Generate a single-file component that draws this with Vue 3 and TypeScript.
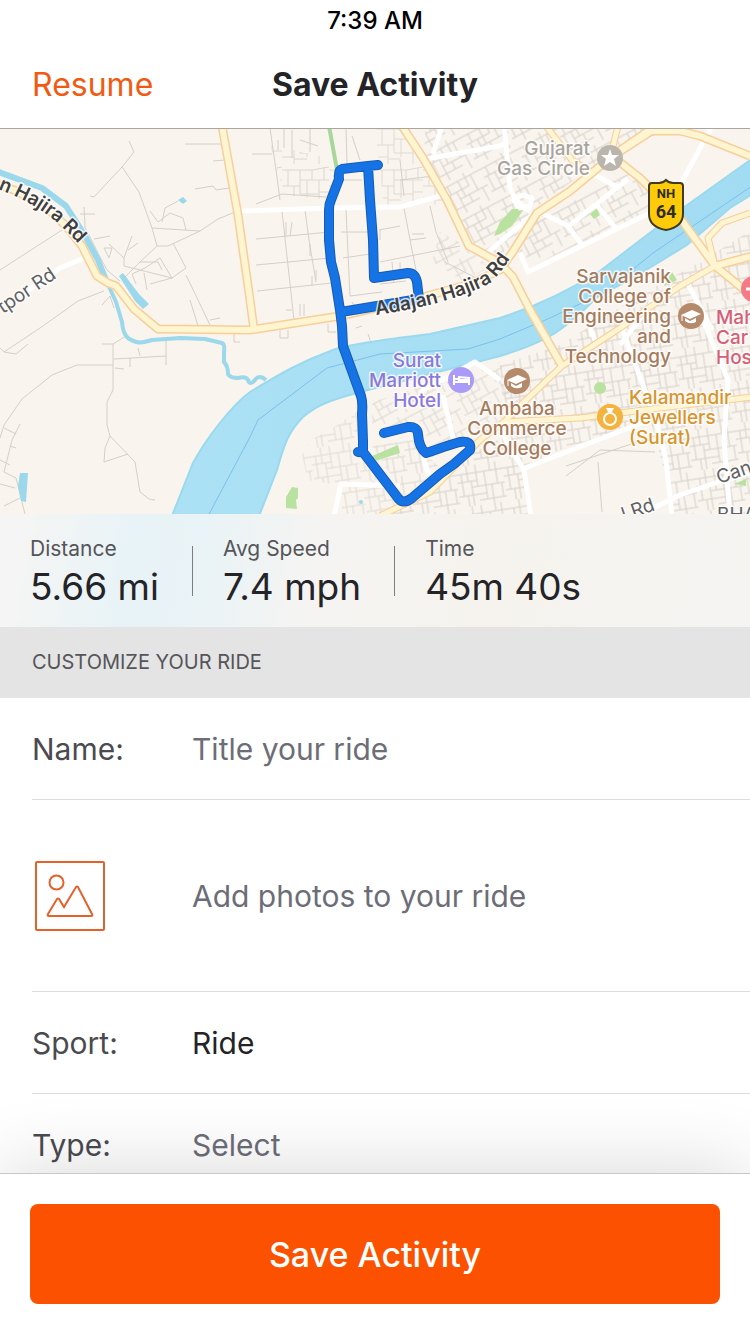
<script setup lang="ts">
import { ref } from 'vue'

interface Stat {
  label: string
  value: string
}

interface MapLabel {
  lines: string[]
  x: number
  y: number
  anchor: 'start' | 'middle' | 'end'
  tone: string
}

const stats: Stat[] = [
  { label: 'Distance', value: '5.66 mi' },
  { label: 'Avg Speed', value: '7.4 mph' },
  { label: 'Time', value: '45m 40s' },
]

const places: MapLabel[] = [
  { lines: ['Gujarat', 'Gas Circle'], x: 590, y: 155, anchor: 'end', tone: 'grey' },
  { lines: ['Sarvajanik', 'College of', 'Engineering', 'and', 'Technology'], x: 671, y: 283, anchor: 'end', tone: 'brown' },
  { lines: ['Surat', 'Marriott', 'Hotel'], x: 441, y: 367, anchor: 'end', tone: 'violet' },
  { lines: ['Ambaba', 'Commerce', 'College'], x: 517, y: 415, anchor: 'middle', tone: 'brown' },
  { lines: ['Kalamandir', 'Jewellers', '(Surat)'], x: 629, y: 404, anchor: 'start', tone: 'amber' },
  { lines: ['Mah', 'Car', 'Hos'], x: 716, y: 324, anchor: 'start', tone: 'rose' },
]

// Main roads are stroked twice: an orange casing, then a pale fill.
const mainRoads: string[] = [
  'M-4 184 L14 190 L45 206 L66 226 L82 246 L97 276 L108 283 L116 286 L134 309 L158 329 L250 330 L340 316 L420 298 L470 284 L500 270 L514 250 L537 213 L570 191 L610 158 L650 132 L668 126',
  'M222 126 L238 215 L250 300 L254 330',
  'M402 126 L423 158 L447 200 L469 246 L500 263 L513 277 L530 310 L562 366',
  'M750 156 L700 136 L680 131 L648 131 L612 156 L640 178 L680 218 L715 266 L752 296',
  'M715 266 L752 256',
]

const minorRoads: string[] = [
  'M546 126 L572 160 L590 172',
  'M618 126 L610 158',
  'M524 402 L562 366 L620 328 L680 286 L715 266',
  'M715 266 L708 238 L722 223 L750 213',
  'M752 397 L660 408 L580 418 L504 422 L480 440 L430 492 L380 516',
  'M504 422 L526 400',
]

const whiteRoads: string[] = [
  'M240 211 L330 208 L400 207 L440 196',
  'M420 160 L500 146 L508 142',
  'M433 154 L442 126',
  'M84 258 L60 268 L20 296',
  'M504 126 L506 146 L510 188 L516 200 L530 212',
  'M514 200 L522 195 L532 198 L530 206 L520 208 Z',
  'M542 213 L568 226 L582 245',
  'M520 253 L528 272 L592 241 L650 213',
  'M670 204 L712 126',
  'M590 172 L617 187 M628 179 L570 225',
  'M596 204 L617 230',
  'M486 254 L512 232 L536 212',
  'M418 400 L423 390 L475 362 L500 380',
  'M443 395 L453 438',
  'M423 456 L430 480',
  'M334 516 L341 484 L400 486',
  'M500 430 L524 470 L531 516',
  'M525 468 L600 439 L650 420',
  'M621 326 L656 420 L666 460 L672 516',
  'M702 318 L728 380 L724 440 L730 516',
  'M645 512 L680 495 L724 480 L760 470',
  'M590 328 L595 340 M620 345 L660 292',
  'M687 282 L712 330',
]

const lanes: string[] = [
  'M129 141 L134 152 L122 167 L94 197 L90 196 M122 167 L139 192 L152 228 L157 246 L168 246 L200 231 L218 219 L240 210',
  'M84 207 L85 227 L98 253 L107 270 L120 281 M80 214 L95 214 M185 144 L222 144 M213 161 L225 160 M195 189 L213 186 L216 190 L229 188',
  'M152 228 L200 231 M157 246 L140 262 L124 278 M173 243 L186 268 L172 278 L124 266 M186 275 L210 325 M190 300 L198 326 M210 320 L220 318',
  'M150 211 L158 222 L170 213 L183 218 L186 230 M162 222 L165 208 L178 201 M94 239 L110 236 M104 248 L112 248 L109 258 L104 248 M109 244 L124 258 L124 266',
  'M124 258 L132 236 M128 250 L138 243 M136 284 L132 274 L145 268 L160 258 L172 278 M144 273 L147 290 M150 284 L172 278 M140 262 L158 262 L162 270',
  'M0 270 L62 230 M104 291 L78 301 L40 328 L4 352 L16 354 L28 344 M0 348 L4 352 M102 305 L110 296 L114 308',
  'M102 344 L113 344 L126 336 M113 344 L113 390 L107 402 L107 425 L110 436 L135 462 L140 492 L149 499 L155 500 M110 436 L105 448 L104 462 L128 454',
  'M114 359 L166 356 L166 340 M115 368 L124 369 M130 358 L130 367 M140 356 L138 348 M166 365 L166 356',
  'M113 365 L77 365 L52 375 L22 399 L4 425 L0 438 M20 424 L12 440 L4 472 L16 478 L25 514 M4 428 L16 434 M0 484 L15 488 M4 506 L20 498 M10 446 L16 448 M0 460 L10 465',
  'M256 239 L330 232 M256 265 L330 258 M257 291 L332 283 M282 211 L294 320 M305 210 L309 240 L316 282 M270 128 L276 170 L280 200 M256 204 L282 194 L326 197',
  'M343 180 L362 180 M341 232 L368 232 M379 230 L400 226 M343 258 L370 254 M380 262 L430 252 L460 246 M400 160 L404 196 M346 210 L350 296',
  'M400 180 L434 176 M404 208 L412 250 L416 270 M430 206 L436 232 L448 262 M380 284 L406 281 M392 262 L394 283 M350 296 L382 292 M445 262 L480 280',
  'M566 476 L600 450 L655 452 M566 466 L655 436 M598 462 L602 512',
  'M278 140 V150 M284 128 V148 M292 130 V158 M252 154 H272 M300 140 L318 146 M310 128 V152 M346 128 L347 164 M352 136 L360 160',
  'M286 222 V236 M292 222 L290 236 M310 244 V256 M316 270 V280 M312 276 V286 M300 304 V316 M304 304 V316 M286 310 H292 M352 302 L358 312 M398 270 H412 M400 262 V274',
  'M380 230 V240 M412 234 H424 M410 240 L426 238 M368 334 L372 346 M356 328 L362 326 M328 324 V332 H336 M280 330 V338 H288 V330 M234 334 V342 H240',
]

const routePath =
  'M378 165 L368 166 L342 169 Q338 170 339 179 L331 200 Q329 204 329 210 V240 L331 262 L335 278 L340 310 L342 326 L343 346 L361 396 Q363 402 362 414 L363 441 V452 L358 452 L363 452 L398 498 Q403 505 412 498 L440 474 L454 464 L470 450 Q472 440 460 442 C445 446 436 450 426 453 Q419 448 418 434 Q417 426 408 427 L384 433 M368 166 L370 200 L373 240 L374 278 L408 273 Q415 273 417 282 L419 299 L341 312'

const title = ref('')
const sport = ref('Ride')
const rideType = ref('')
</script>

<template>
  <div class="screen">
    <header class="top">
      <div class="clock">7:39 AM</div>
      <nav class="nav">
        <button type="button" class="resume">Resume</button>
        <h1 class="heading">Save Activity</h1>
      </nav>
    </header>

    <main class="content">
      <svg class="map" viewBox="0 129 750 385" role="img" aria-label="Route map">
        <defs>
          <pattern id="blocks" width="47" height="41" patternUnits="userSpaceOnUse">
            <path
              class="street"
              d="M0 6 H30 M30 6 L47 3 M0 22 H18 M18 16 H47 M6 6 V22 M12 22 V41 M18 6 V30 M30 6 V16 M37 16 V41 M25 16 V34 M18 30 H37 M0 34 H12 M37 28 H47 M42 3 V16 M12 36 H25"
            />
          </pattern>
          <pattern id="blocks-east" patternTransform="rotate(-9)" width="47" height="41" patternUnits="userSpaceOnUse">
            <path
              class="street"
              d="M0 8 H47 M0 16 H20 M14 22 H47 M0 30 H28 M20 36 H47 M5 8 V30 M11 0 V16 M14 16 V41 M20 0 V22 M28 8 V36 M34 22 V41 M40 0 V22 M44 22 V36 M34 0 V8 M9 30 V41"
            />
          </pattern>
          <pattern id="blocks-north" patternTransform="rotate(-28)" width="43" height="37" patternUnits="userSpaceOnUse">
            <path
              class="street"
              d="M0 5 H43 M0 14 H26 M12 22 H43 M0 30 H30 M6 5 V14 M12 14 V37 M18 5 V22 M26 0 V14 M32 5 V22 M22 22 V30 M37 22 V37 M4 14 V30"
            />
          </pattern>
          <linearGradient id="riverFill" x1="0" y1="0" x2="1" y2="0">
            <stop offset="0" stop-color="#ace1f5" />
            <stop offset="1" stop-color="#a2dcf2" />
          </linearGradient>
        </defs>

        <rect class="land" x="0" y="129" width="750" height="385" />

        <polygon fill="url(#blocks-north)" points="425,129 650,129 608,155 530,212 512,245 495,262 470,243 445,196 424,158" />
        <polygon fill="url(#blocks-north)" points="560,208 630,172 660,205 528,268 519,252 538,216" />
        <polygon fill="url(#blocks)" points="375,129 405,129 424,164 446,202 428,206 384,206" opacity=".7" />
        <polygon fill="url(#blocks)" points="270,145 336,160 330,200 285,195" opacity=".8" />
        <polygon fill="url(#blocks-north)" points="440,232 466,246 490,268 462,280 432,262" opacity=".8" />
        <polygon fill="url(#blocks-east)" points="500,365 560,345 640,295 700,262 752,230 752,514 675,514 655,436 650,420 560,450 525,468 505,435" />
        <polygon fill="url(#blocks-north)" points="372,402 500,362 520,400 490,430 455,440 425,450 412,425 372,432" opacity=".8" />
        <polygon fill="url(#blocks-east)" points="302,455 310,440 330,430 356,412 362,450 405,506 395,514 342,514 342,486 308,480" opacity=".7" />
        <polygon fill="url(#blocks-east)" points="372,446 412,440 440,468 405,496" opacity=".8" />
        <polygon fill="url(#blocks-east)" points="475,452 505,435 524,470 532,514 395,514 440,480" />

        <g class="lanes">
          <path v-for="d in lanes" :key="d" :d="d" />
        </g>

        <g class="park">
          <path d="M500 222 L512 209 L524 209 L512 226 L500 234 L494 236 Z" />
          <path d="M590 214 L597 208 L600 215 L594 219 Z" />
          <path d="M372 456 L398 445 L400 453 L372 462 Z" />
          <path d="M286 497 L292 487 L298 488 L298 498 L296 500 L297 509 L286 508 Z" />
          <circle cx="600" cy="388" r="6" />
          <path d="M664 286 L672 272 L677 280 Z" />
          <path d="M734 484 L746 479 L746 486 Z" />
        </g>
        <path class="green-lane" d="M329 126 L337 170" />

        <path
          class="river"
          d="M756 156 L683 208 L647 235 L600 271 C570 290 540 305 500 318 L430 334 C380 340 345 345 333 350 C300 362 280 374 250 392 C232 405 205 440 193 463 L172 516 H259 L277 470 C284 445 288 432 303 417 C320 402 340 398 360 392 L500 356 C540 344 560 335 597 297 L633 278 L687 245 L730 208 L756 192 Z"
        />
        <path class="current" d="M752 186 L687 230 L653 253 L605 292 L550 318 L500 339 L468 349 L380 354 L327 368 L258 420 L250 437 L208 516" />

        <g class="creek">
          <path class="creek-wide" d="M-4 171 L42 188 L66 206 L84 234 L98 260 L106 280" />
          <path
            d="M106 280 L116 302 L122 322 Q123 334 128 338 C138 345 145 342 152 340 L180 338 L205 339 L222 343 Q225 344 224 352 L224 362 Q228 366 228 374 Q230 378 238 378 Q246 376 248 380 Q250 386 255 380 Q259 374 266 380"
          />
        </g>
        <g class="pond">
          <path d="M119 276 L123 273 L139 294 L149 304 L143 309 L135 301 Z" />
          <path d="M20 473 L28 473 L26 502 L21 501 L18 486 Z" />
          <path d="M178 200 L183 197 L187 201 L183 204 Z" />
          <circle cx="361" cy="502" r="2" />
        </g>

        <g class="white-roads">
          <path v-for="d in whiteRoads" :key="d" :d="d" />
        </g>
        <g class="road-casing">
          <path v-for="d in minorRoads" :key="d" class="minor" :d="d" />
          <path v-for="d in mainRoads" :key="d" :d="d" />
        </g>
        <g class="road-fill">
          <path v-for="d in minorRoads" :key="d" class="minor" :d="d" />
          <path v-for="d in mainRoads" :key="d" :d="d" />
        </g>

        <path class="route-edge" :d="routePath" />
        <path class="route" :d="routePath" />

        <defs>
          <path id="adajan" d="M376 315 C420 309 462 298 488 284 Q503 274 526 232" />
          <path id="hajira" d="M-2 189 C30 202 56 214 94 262" />
          <path id="canal" d="M719 484 L765 468" />
        </defs>
        <text class="road-name strong"><textPath href="#adajan">Adajan Hajira Rd</textPath></text>
        <text class="road-name strong"><textPath href="#hajira">n Hajira Rd</textPath></text>
        <text class="road-name" transform="translate(3 314) rotate(-34)">tpor Rd</text>
        <text class="road-name"><textPath href="#canal">Can</textPath></text>
        <text class="road-name" transform="translate(624 521) rotate(-19)">l Rd</text>
        <text class="road-name" x="717" y="521">BHA</text>

        <text v-for="place in places" :key="place.lines[0]" class="place" :class="place.tone" :text-anchor="place.anchor">
          <tspan v-for="(line, i) in place.lines" :key="line" :x="place.x" :y="place.y + i * 20">{{ line }}</tspan>
        </text>

        <circle cx="610" cy="158" r="13" fill="#bab5ad" />
        <path fill="#fff" d="M610 149 L612 155 L619 155 L614 159 L616 166 L610 162 L604 166 L606 159 L601 155 L608 155 Z" />

        <g v-for="pin in [{ x: 691, y: 316 }, { x: 517, y: 381 }]" :key="pin.x" :transform="`translate(${pin.x} ${pin.y})`">
          <circle r="13" fill="#b58a6b" />
          <path fill="#fff" d="M-10 -1 L1 -6 L10 -2 L-1 3 Z M-6 2 L-1 5 L5 2 L5 6 Q-1 9 -6 5 Z" />
          <path fill="none" stroke="#fff" d="M-9 -1 V5" />
        </g>

        <circle cx="461" cy="380" r="13" fill="#ab9bf8" />
        <path fill="none" stroke="#fff" stroke-width="2" d="M454 375 V385 M454 382 H469 V385 M469 382 V378 L459 377 V380 H469 M455 379 H458" />

        <circle cx="610" cy="417" r="13" fill="#f5b23c" />
        <circle cx="610" cy="419" r="6" fill="none" stroke="#fff" stroke-width="2" />
        <path fill="#fff" d="M606 408 H614 L612 412 H608 Z" />

        <circle cx="754" cy="289" r="13" fill="#f47a88" />
        <path stroke="#fff" stroke-width="3" d="M746 289 H760" />

        <path
          class="shield"
          d="M649 186 Q649 183 652 183 H659 Q663 183 666 180 Q669 183 673 183 H680 Q683 183 683 186 V214 C683 223 677 228 666 230 C655 228 649 223 649 214 Z"
        />
        <text class="shield-code" x="666" y="198" text-anchor="middle">NH</text>
        <text class="shield-number" x="666" y="218" text-anchor="middle">64</text>
      </svg>

      <dl class="stats">
        <div v-for="stat in stats" :key="stat.label" class="stat">
          <dt>{{ stat.label }}</dt>
          <dd>{{ stat.value }}</dd>
        </div>
      </dl>

      <h2 class="section">CUSTOMIZE YOUR RIDE</h2>

      <form id="ride" class="form" @submit.prevent>
        <div class="row">
          <label for="name">Name:</label>
          <input id="name" v-model="title" type="text" placeholder="Title your ride" />
        </div>
        <button type="button" class="row photos">
          <svg class="photo-icon" viewBox="0 0 70 70" aria-hidden="true">
            <rect x="1" y="1" width="68" height="68" rx="1" />
            <circle cx="21.5" cy="21.5" r="7" />
            <path d="M13 53 L22 38 Q23 37 24 38 L29 46 L41 26 Q42 25 43 26 L57 53 Q58 55 56 55 H14 Q12 55 13 53 Z" />
          </svg>
          <span>Add photos to your ride</span>
        </button>
        <div class="row">
          <label for="sport">Sport:</label>
          <select id="sport" v-model="sport" class="chosen">
            <option>Ride</option>
          </select>
        </div>
        <div class="row">
          <label for="type">Type:</label>
          <select id="type" v-model="rideType">
            <option value="">Select</option>
          </select>
        </div>
      </form>
    </main>

    <footer class="footer">
      <button type="submit" form="ride" class="save">Save Activity</button>
    </footer>
  </div>
</template>

<style>
body {
  margin: 0;
  background: #fff;
}
</style>

<style scoped>
.screen {
  display: flex;
  flex-direction: column;
  height: 100vh;
  overflow: hidden;
  background: #fff;
  color: #242428;
  font-family: Inter, Roboto, "Liberation Sans", sans-serif;
}

button,
input,
select {
  margin: 0;
  padding: 0;
  border: 0;
  background: none;
  font: inherit;
  color: inherit;
  text-align: left;
}

.top {
  flex: none;
  border-bottom: 1px solid #a9a6a2;
}

.clock {
  height: 40px;
  color: #000;
  font-size: 24px;
  font-weight: 500;
  line-height: 42px;
  text-align: center;
}

.nav {
  display: grid;
  grid-template-columns: 1fr auto 1fr;
  align-items: center;
  height: 88px;
  padding: 0 32px;
}

.resume {
  color: #f25a12;
  font-size: 32px;
}

.heading {
  margin: 0;
  font-size: 32px;
  font-weight: 700;
}

.content {
  flex: 1;
  min-height: 0;
  overflow-y: auto;
  scrollbar-width: none;
}

.map {
  display: block;
  width: 100%;
  height: auto;
}

.land {
  fill: #f9f4ed;
}

.street,
.lanes {
  fill: none;
  stroke: #d4d0ca;
  stroke-width: 1px;
}

.park {
  fill: #b9e2a0;
}

.green-lane {
  fill: none;
  stroke: #a8d79b;
  stroke-width: 4px;
}

.river {
  fill: url(#riverFill);
  stroke: #9ad9ee;
  stroke-width: 2px;
}

.current {
  fill: none;
  stroke: #7cc0ec;
  stroke-width: 1px;
}

.creek {
  fill: none;
  stroke: #9bd8ec;
  stroke-width: 4px;
  stroke-linejoin: round;
}

.creek-wide {
  stroke-width: 6px;
}

.pond {
  fill: #9bd8ec;
}

.white-roads {
  fill: none;
  stroke: #fff;
  stroke-width: 5px;
  stroke-linejoin: round;
}

.road-casing,
.road-fill {
  fill: none;
  stroke-linejoin: round;
}

.road-casing {
  stroke: #f6cf9b;
  stroke-width: 9px;
}

.road-fill {
  stroke: #fff5d0;
  stroke-width: 6px;
}

.road-casing .minor {
  stroke-width: 7px;
}

.road-fill .minor {
  stroke-width: 5px;
}

.route,
.route-edge {
  fill: none;
  stroke-linecap: round;
  stroke-linejoin: round;
}

.route-edge {
  stroke: #165cb4;
  stroke-width: 10px;
}

.route {
  stroke: #1673e6;
  stroke-width: 8px;
}

.road-name,
.place {
  paint-order: stroke;
  stroke: #fffc;
  stroke-width: 3px;
  stroke-linejoin: round;
}

.road-name {
  fill: #5f6063;
  font-size: 19px;
}

.strong {
  fill: #3f3f42;
  font-weight: 600;
}

.place {
  font-size: 19px;
  font-weight: 500;
}

.grey {
  fill: #a8a49e;
}

.brown {
  fill: #a57b5c;
}

.violet {
  fill: #8a78dd;
}

.amber {
  fill: #d8952c;
}

.rose {
  fill: #d75f75;
}

.shield {
  fill: #fecb0a;
  stroke: #3f3a20;
  stroke-width: 2px;
}

.shield-code,
.shield-number {
  fill: #2f2c20;
  font-family: Roboto, sans-serif;
  font-weight: 700;
}

.shield-code {
  font-size: 13px;
}

.shield-number {
  font-size: 18px;
}

.stats {
  display: flex;
  margin: 0;
  padding: 20px 30px 18px;
  background: linear-gradient(100deg, #f4f5f4 4%, #e8f3f7 18%, #eaf3f6 28%, #f5f4f2 42%, #f6f3ee 65%, #f5f4f2);
}

.stat {
  position: relative;
  padding-right: 33px;
}

.stat + .stat {
  padding-left: 31px;
}

.stat + .stat::before {
  position: absolute;
  top: 12px;
  bottom: 13px;
  left: 0;
  width: 1px;
  background: #7d7d80;
  content: "";
}

.stat dt {
  color: #55555a;
  font-size: 21px;
  line-height: 30px;
}

.stat dd {
  margin: 0;
  font-size: 37px;
  line-height: 45px;
}

.section {
  margin: 0;
  padding: 0 32px;
  background: #e4e4e4;
  color: #55555a;
  font-size: 20px;
  font-weight: 400;
  line-height: 71px;
}

.form {
  padding-left: 32px;
}

.row {
  display: grid;
  grid-template-columns: 160px 1fr;
  align-items: center;
  box-sizing: border-box;
  width: 100%;
  height: 102px;
  border-bottom: 1px solid #dcdcde;
  color: #4a4a50;
  font-size: 30px;
}

.row input,
.row select {
  width: 100%;
  outline: none;
  appearance: none;
  color: #6d6d78;
}

.row input::placeholder {
  color: #6d6d78;
  opacity: 1;
}

.row .chosen {
  color: #242428;
}

.photos {
  height: 192px;
  border-bottom: 1px solid #dcdcde;
  color: #6d6d78;
}

.photo-icon {
  width: 70px;
  height: 70px;
  margin-left: 3px;
  fill: none;
  stroke: #e5602b;
  stroke-width: 2px;
}

.footer {
  position: relative;
  flex: none;
  padding: 30px;
  border-top: 1px solid #c8c8c8;
  background: #fff;
  box-shadow: 0 0 80px rgba(0, 0, 0, 0.16);
}

.save {
  display: block;
  width: 100%;
  height: 100px;
  border-radius: 8px;
  background: #fc5200;
  color: #fff;
  font-size: 34px;
  font-weight: 500;
  text-align: center;
}
</style>
